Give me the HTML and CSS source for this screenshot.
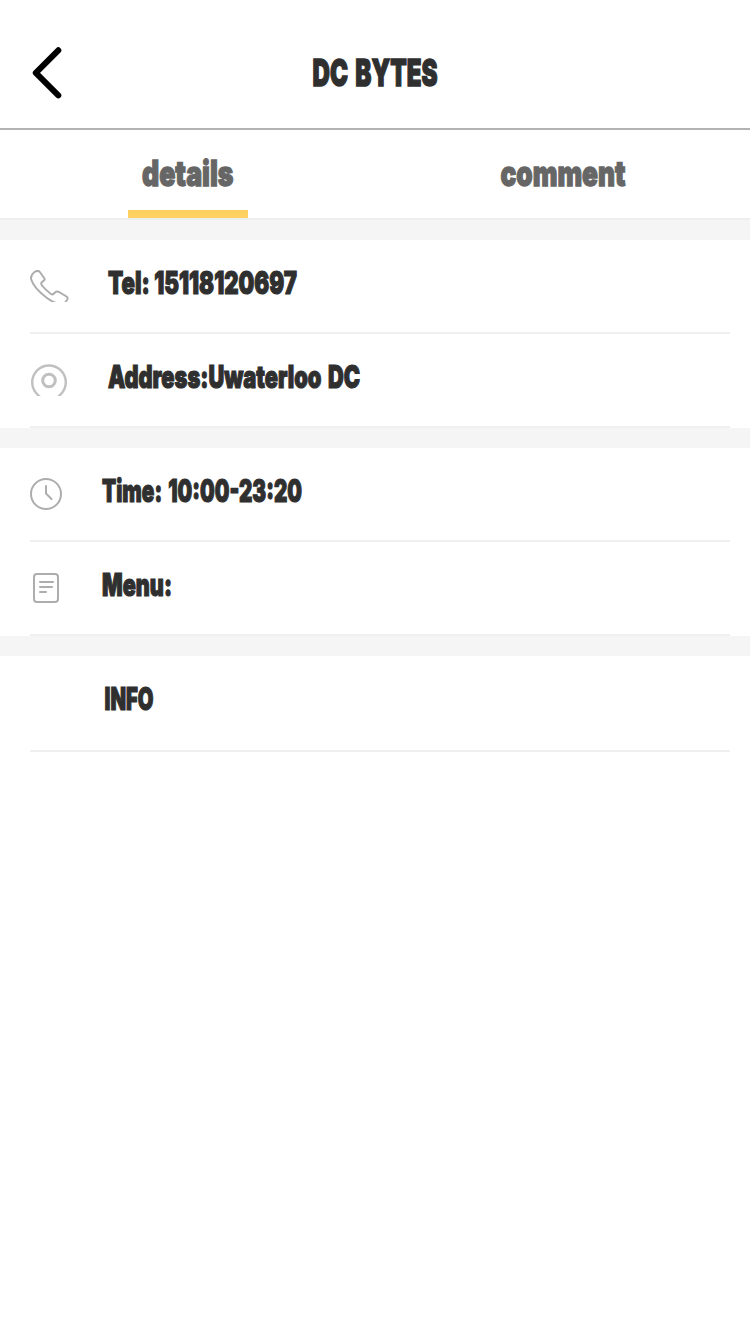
FILE: index.html
```html
<!DOCTYPE html>
<html lang="en">
<head>
<meta charset="utf-8">
<title>DC BYTES</title>
<link rel="stylesheet" href="styles.css">
</head>
<body>
<header class="header">
  <svg class="back" width="32" height="54" viewBox="0 0 32 54"><path d="M27.300 4.300 4.800 26.800 27.300 49.300"/></svg>
  <svg class="label title" width="126" height="40"><text x="0.500" y="30" textLength="125" lengthAdjust="spacingAndGlyphs">DC BYTES</text></svg>
</header>
<nav class="tabs">
  <div class="tab"><div class="tab-inner active"><svg class="label tab-label" width="92" height="40"><text x="0" y="29.500" textLength="91.500" lengthAdjust="spacingAndGlyphs">details</text></svg></div></div>
  <div class="tab"><div class="tab-inner"><svg class="label tab-label" width="126" height="40"><text x="0.500" y="29.500" textLength="125" lengthAdjust="spacingAndGlyphs">comment</text></svg></div></div>
</nav>
<section class="group">
  <div class="row">
    <svg class="icon wide" width="40" height="32" viewBox="0 0 40 32"><path d="M1 9Q.5 5 4.500 2Q8 -.3 9.800 2L14.500 8.500Q15 9.800 13.500 10.800L11.500 12.500Q10.800 14 12 15.500Q15.500 20 21 24Q22.500 25 24 23.500L25.500 22Q27 21 29 22L36.500 26.500Q38.500 28 37 30L34 34C29 35 22.500 32 17 28C9 22 3 15.500 1 9Z"/></svg>
    <svg class="label" width="200" height="36"><text x="0" y="30" textLength="189" lengthAdjust="spacingAndGlyphs">Tel: 15118120697</text></svg>
  </div>
  <div class="row">
    <svg class="icon wide pin" width="40" height="32" viewBox="0 0 40 32"><path d="M19 42 7 30A16.800 16.800 0 1 1 31 30Z"/><circle class="pin-dot" cx="19" cy="16.500" r="6.300"/></svg>
    <svg class="label" width="260" height="36"><text class="space-s" x="0" y="30" textLength="252" lengthAdjust="spacingAndGlyphs">Address:Uwaterloo DC</text></svg>
  </div>
</section>
<section class="group">
  <div class="row">
    <svg class="icon" width="32" height="32" viewBox="0 0 32 32"><circle cx="16" cy="16" r="15"/><path d="M16 8v7.500l5.500 5.500"/></svg>
    <svg class="label" width="210" height="36"><text class="space-s" x="0" y="30" textLength="200" lengthAdjust="spacingAndGlyphs">Time: 10:00-23:20</text></svg>
  </div>
  <div class="row">
    <svg class="icon" width="32" height="32" viewBox="0 0 32 32"><rect x="4" y="2" width="24" height="28" rx="3"/><path d="M10 10h13M10 15h12M10 20h6"/></svg>
    <svg class="label" width="80" height="36"><text x="0" y="30" textLength="70" lengthAdjust="spacingAndGlyphs">Menu:</text></svg>
  </div>
</section>
<section class="group">
  <div class="row info">
    <svg class="label" width="60" height="36"><text x="0.500" y="30" textLength="49" lengthAdjust="spacingAndGlyphs">INFO</text></svg>
  </div>
</section>
</body>
</html>
```
FILE: styles.css
```css
* { box-sizing: border-box; }
body { margin: 0; background: #fff; min-height: 1334px; }
svg { display: block; flex: none; }
.header {
  display: grid;
  grid-template-columns: 1fr auto 1fr;
  height: 130px;
  border-bottom: 2px solid #b2b2b2;
}
.back {
  margin: 46px 0 0 31px;
  fill: none;
  stroke: #000;
  stroke-width: 6;
  stroke-linecap: round;
  stroke-linejoin: round;
}
.label {
  overflow: visible;
  font-family: Impact, Inter, Roboto, sans-serif;
  font-weight: 900;
  font-size: 31px;
  fill: #2f2f2f;
  stroke: #2f2f2f;
  stroke-width: 1.2;
}
.title { margin-top: 56px; font-size: 37px; stroke-width: 1.4; word-spacing: 4px; }
.space-s { word-spacing: 3px; }
.tabs {
  display: flex;
  height: 90px;
  border-bottom: 2px solid #eee;
}
.tab { flex: 1; display: flex; justify-content: center; }
.tab-inner {
  display: flex;
  justify-content: center;
  width: 120px;
  height: 88px;
  padding-top: 26px;
}
.active { border-bottom: 8px solid #ffd161; }
.tab-label { font-size: 35px; fill: #666; stroke: #666; stroke-width: 1.3; }
.group { border-top: 20px solid #f5f5f5; }
.row {
  display: flex;
  align-items: flex-start;
  gap: 40px;
  height: 94px;
  margin: 0 20px 0 30px;
  padding-top: 24px;
  border-bottom: 2px solid #f0f0f0;
}
.icon {
  margin-top: 6px;
  fill: none;
  stroke: #adadad;
  stroke-width: 2;
  stroke-linejoin: round;
  stroke-linecap: round;
}
.wide { margin-right: -2px; }
.pin { stroke: #c0c0c0; stroke-width: 2.4; }
.pin-dot { stroke-width: 3; }
.info { height: 96px; padding-left: 74px; }
```
